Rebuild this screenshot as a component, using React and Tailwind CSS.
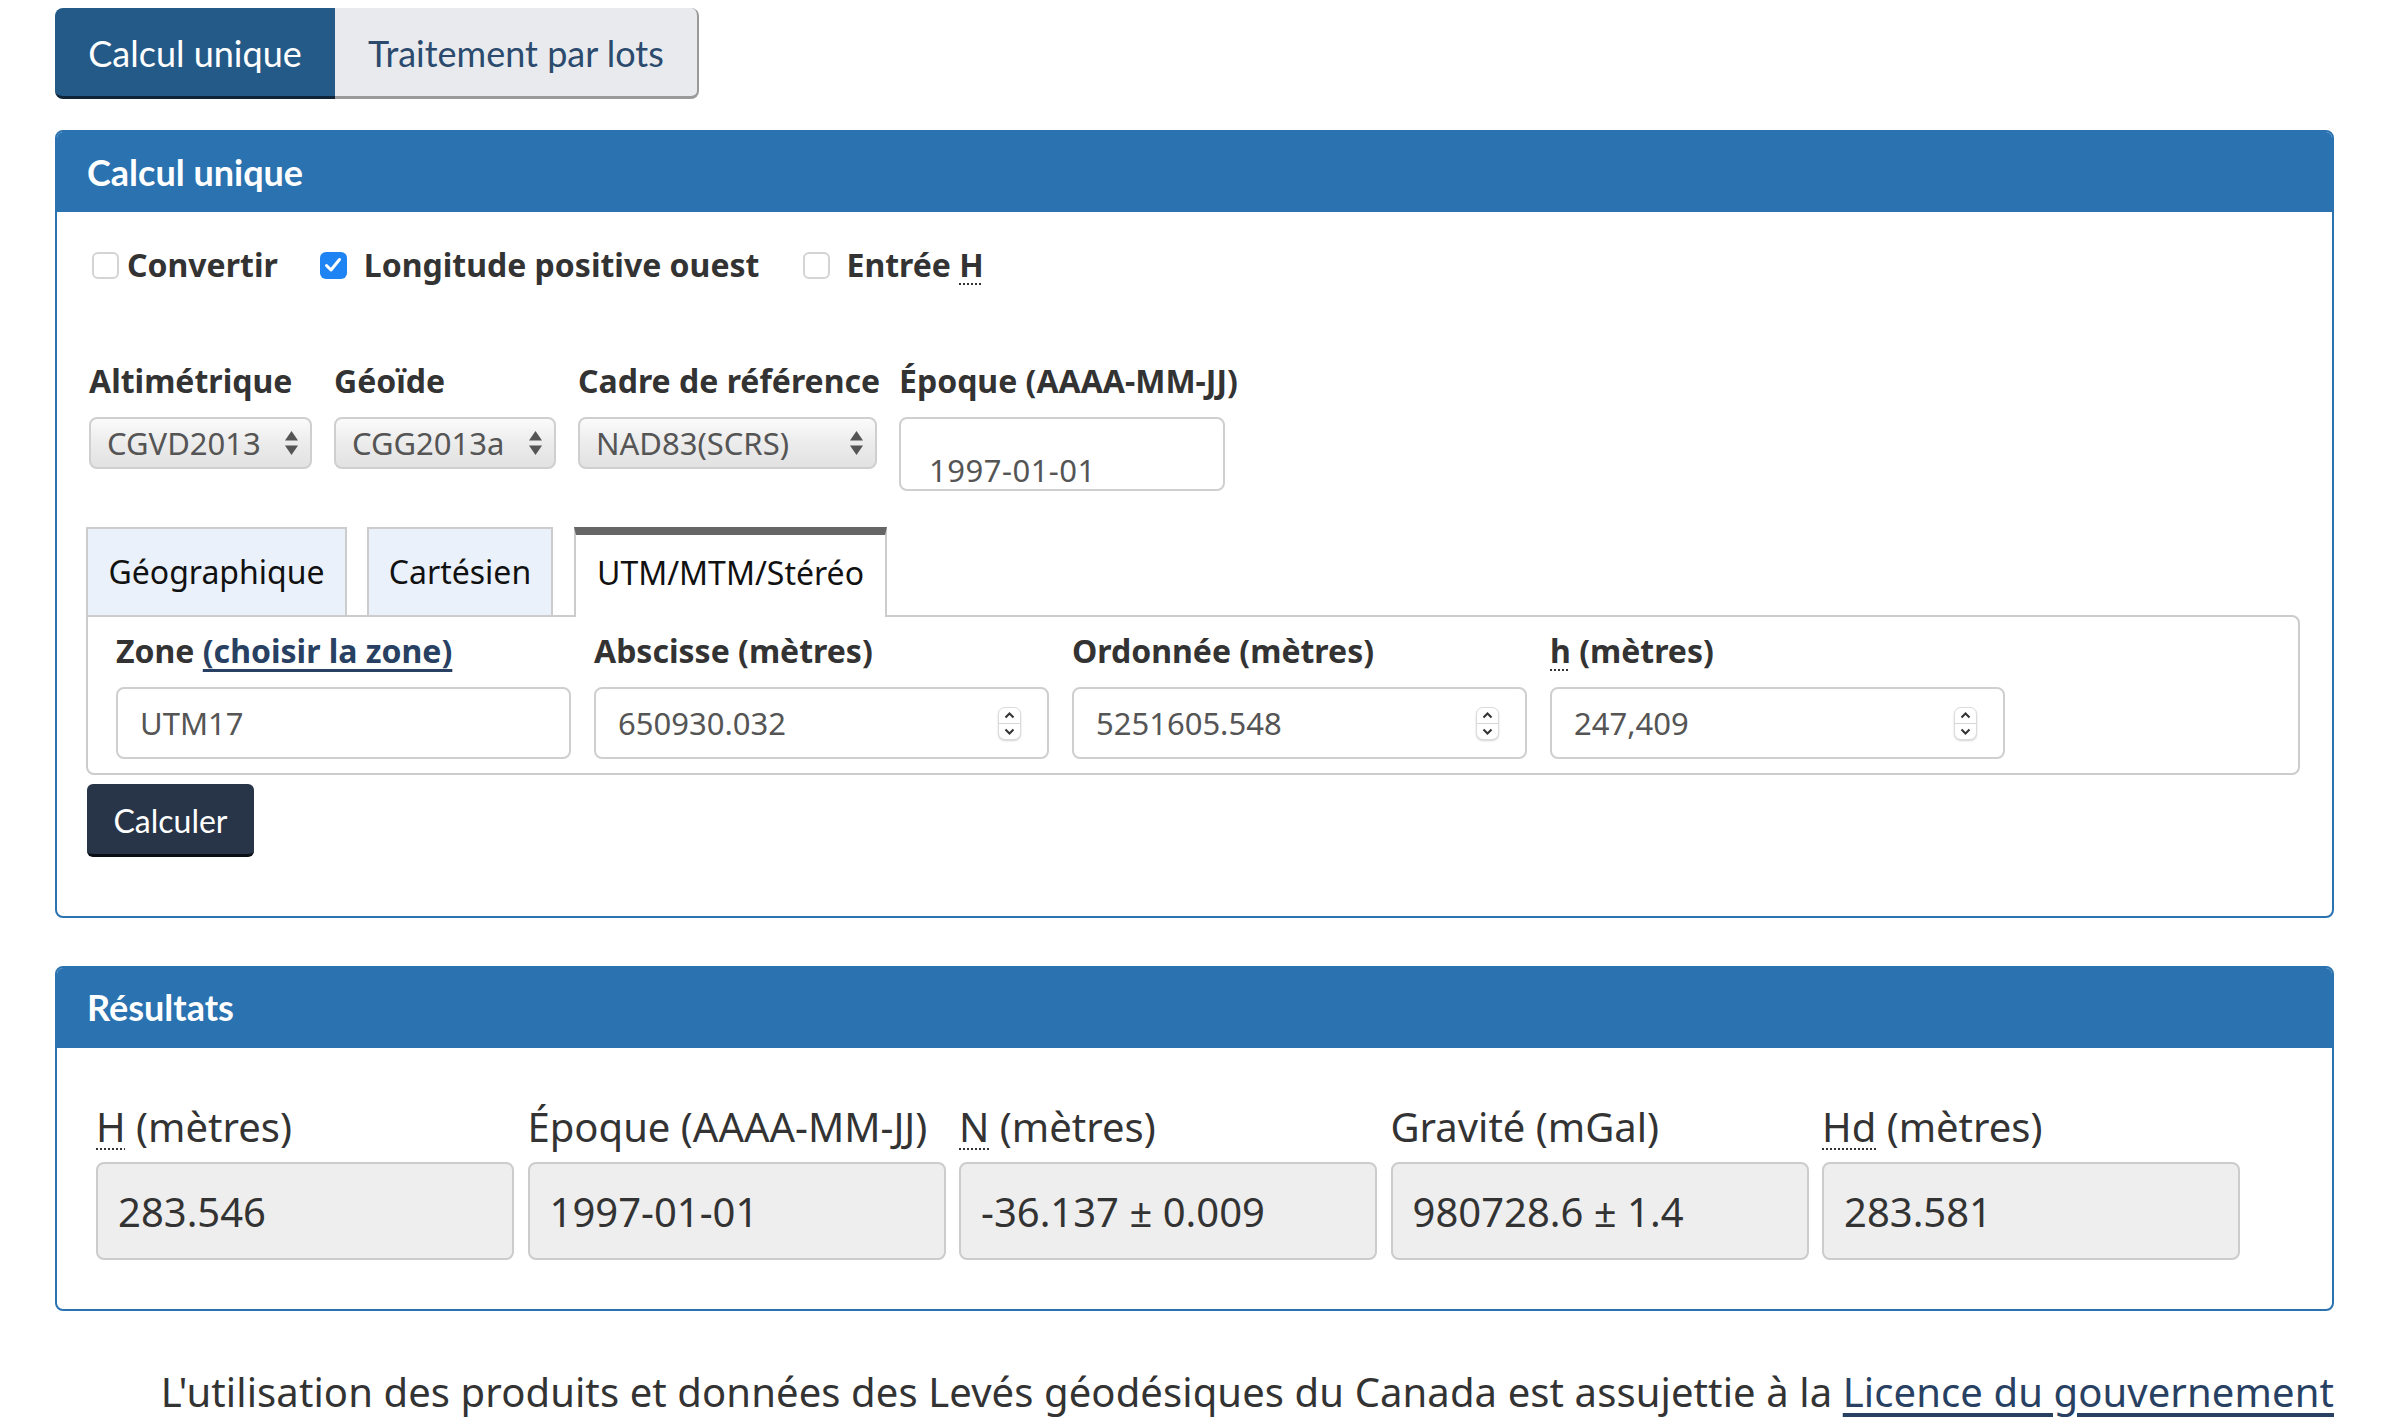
import React from 'react';

const body = { fontFamily: '"Noto Sans", "Open Sans", sans-serif' };
const lato = { fontFamily: 'Lato, "Noto Sans", sans-serif' };

const SelectArrows = () => (
    <svg width="15" height="26" viewBox="0 0 15 26" className="shrink-0">
        <path d="M7.5 1 L14 10.5 L1 10.5 Z" fill="#555" />
        <path d="M7.5 25 L14 15.5 L1 15.5 Z" fill="#555" />
    </svg>
);

const Spinner = () => (
    <div className="w-[23px] h-[33px] shrink-0 rounded-[7px] bg-white border border-[#dcdcdc] shadow-[0_1px_2px_rgba(0,0,0,0.18)] flex flex-col">
        <div className="flex-1 flex items-center justify-center border-b border-[#d6d6d6]">
            <svg width="11" height="7" viewBox="0 0 11 7"><path d="M1.5 5.5 L5.5 1.5 L9.5 5.5" stroke="#333" strokeWidth="2" fill="none" /></svg>
        </div>
        <div className="flex-1 flex items-center justify-center">
            <svg width="11" height="7" viewBox="0 0 11 7"><path d="M1.5 1.5 L5.5 5.5 L9.5 1.5" stroke="#333" strokeWidth="2" fill="none" /></svg>
        </div>
    </div>
);

const Checkbox = ({ checked }) =>
    checked ? (
        <span className="block w-[27px] h-[27px] rounded-[6px] bg-[#1f84f3] flex items-center justify-center shrink-0">
            <svg width="18" height="16" viewBox="0 0 18 16">
                <path d="M2.5 8.5 L7 13 L15.5 2.5" stroke="#fff" strokeWidth="3" fill="none" strokeLinecap="round" strokeLinejoin="round" />
            </svg>
        </span>
    ) : (
        <span className="block w-[27px] h-[27px] rounded-[6px] bg-white border-2 border-[#d4d4d4] shrink-0" />
    );

const Select = ({ value, width }) => (
    <div
        className={`h-[52px] rounded-[8px] border-2 border-[#cfcfcf] bg-linear-to-b from-[#fbfbfb] via-[#ececec] to-[#e2e2e2] flex items-center justify-between pl-[16px] pr-[11px] text-[31px] text-[#555] leading-none ${width}`}
    >
        <span>{value}</span>
        <SelectArrows />
    </div>
);

const Abbr = ({ children }) => (
    <span className="underline decoration-dotted decoration-[2px] underline-offset-[6px]">{children}</span>
);

const coordFields = [
    { label: 'Abscisse (mètres)', value: '650930.032' },
    { label: 'Ordonnée (mètres)', value: '5251605.548' },
    { label: <><Abbr>h</Abbr> (mètres)</>, value: '247,409' },
];

const results = [
    { label: <><Abbr>H</Abbr> (mètres)</>, value: '283.546' },
    { label: 'Époque (AAAA-MM-JJ)', value: '1997-01-01' },
    { label: <><Abbr>N</Abbr> (mètres)</>, value: '-36.137 ± 0.009' },
    { label: 'Gravité (mGal)', value: '980728.6 ± 1.4' },
    { label: <><Abbr>Hd</Abbr> (mètres)</>, value: '283.581' },
];

export default function App() {
    return (
        <div className="w-[2392px] h-[1428px] overflow-hidden bg-white text-[#333]" style={body}>
            <div className="pl-[55px] pr-[58px] pt-[8px]">
                {/* Onglets du haut */}
                <div className="flex" style={lato}>
                    <div className="w-[280px] h-[91px] rounded-l-[8px] bg-[#245a88] border-b-[3px] border-[#0f2438] text-white text-[36px] flex items-center justify-center pt-[2px]">
                        Calcul unique
                    </div>
                    <div className="w-[364px] h-[91px] rounded-r-[8px] bg-[#e9eaed] border-b-[3px] border-r-2 border-[#9a9a9a] text-[#2b4a6d] text-[36px] flex items-center justify-center pt-[2px]">
                        Traitement par lots
                    </div>
                </div>

                {/* Panneau Calcul unique */}
                <div className="mt-[31px] border-2 border-[#2a72b0] rounded-[8px] overflow-hidden">
                    <div className="h-[80px] bg-[#2a72b0] text-white text-[36px] font-bold flex items-center pl-[30px]" style={lato}>
                        Calcul unique
                    </div>
                    <div className="px-[30px] pt-[29px] pb-[59px]">
                        <div className="flex items-center h-[48px] text-[32px] font-bold leading-[48px]">
                            <span className="ml-[5px]"><Checkbox /></span>
                            <span className="ml-[8px]">Convertir</span>
                            <span className="ml-[42px]"><Checkbox checked /></span>
                            <span className="ml-[17px]">Longitude positive ouest</span>
                            <span className="ml-[44px]"><Checkbox /></span>
                            <span className="ml-[16px]">Entrée <Abbr>H</Abbr></span>
                        </div>

                        <div className="mt-[68px] ml-[2px] flex gap-[22px] items-start">
                            <div className="w-[223px]">
                                <div className="text-[32px] font-bold leading-[48px] whitespace-nowrap">Altimétrique</div>
                                <div className="mt-[12px]"><Select value="CGVD2013" width="w-[223px]" /></div>
                            </div>
                            <div className="w-[222px]">
                                <div className="text-[32px] font-bold leading-[48px] whitespace-nowrap">Géoïde</div>
                                <div className="mt-[12px]"><Select value="CGG2013a" width="w-[222px]" /></div>
                            </div>
                            <div className="w-[299px]">
                                <div className="text-[32px] font-bold leading-[48px] whitespace-nowrap">Cadre de référence</div>
                                <div className="mt-[12px]"><Select value="NAD83(SCRS)" width="w-[299px]" /></div>
                            </div>
                            <div className="w-[326px]">
                                <div className="text-[32px] font-bold leading-[48px] whitespace-nowrap">Époque (AAAA-MM-JJ)</div>
                                <div className="mt-[12px] h-[74px] border-2 border-[#cfcfcf] rounded-[8px] pl-[28px] pt-[31px] text-[31px] leading-[40px] text-[#555] tracking-[0.5px]">
                                    1997-01-01
                                </div>
                            </div>
                        </div>

                        {/* Onglets de coordonnées */}
                        <div className="mt-[36px] -ml-[1px]">
                            <div className="flex items-end -mb-[2px] text-[32px] text-[#111]">
                                <div className="w-[261px] h-[90px] bg-[#eaf1fb] border-2 border-[#cccccc] flex items-center justify-center">
                                    Géographique
                                </div>
                                <div className="ml-[20px] w-[186px] h-[90px] bg-[#eaf1fb] border-2 border-[#cccccc] flex items-center justify-center">
                                    Cartésien
                                </div>
                                <div className="ml-[21px] w-[313px] h-[90px] bg-white border-x-2 border-x-[#cccccc] border-t-[8px] border-t-[#666666] flex items-center justify-center pb-[6px] relative z-10">
                                    UTM/MTM/Stéréo
                                </div>
                            </div>
                            <div className="w-[2214px] border-2 border-[#cccccc] rounded-b-[8px] rounded-tr-[8px] pl-[28px] pt-[10px] pb-[14px] flex gap-[23px]">
                                <div className="w-[455px]">
                                    <div className="text-[32px] font-bold leading-[48px] whitespace-nowrap">
                                        Zone{' '}
                                        <span className="text-[#284162] underline decoration-[3px] underline-offset-[6px]">(choisir la zone)</span>
                                    </div>
                                    <div className="mt-[12px] h-[72px] border-2 border-[#cfcfcf] rounded-[8px] flex items-center pl-[22px] text-[31px] text-[#555]">
                                        UTM17
                                    </div>
                                </div>
                                {coordFields.map((f, i) => (
                                    <div key={i} className="w-[455px]">
                                        <div className="text-[32px] font-bold leading-[48px] whitespace-nowrap">{f.label}</div>
                                        <div className="mt-[12px] h-[72px] border-2 border-[#cfcfcf] rounded-[8px] flex items-center justify-between pl-[22px] pr-[26px] text-[31px] text-[#555]">
                                            <span>{f.value}</span>
                                            <Spinner />
                                        </div>
                                    </div>
                                ))}
                            </div>
                        </div>

                        <button
                            className="mt-[9px] w-[167px] h-[73px] rounded-[6px] bg-[#283447] border-b-[3px] border-[#0a0f17] text-white text-[32px] flex items-center justify-center pt-[4px]"
                            style={lato}
                        >
                            Calculer
                        </button>
                    </div>
                </div>

                {/* Panneau Résultats */}
                <div className="mt-[48px] border-2 border-[#2a72b0] rounded-[8px] overflow-hidden">
                    <div className="h-[80px] bg-[#2a72b0] text-white text-[36px] font-bold flex items-center pl-[30px] pb-[2px]" style={lato}>
                        Résultats
                    </div>
                    <div className="pl-[39px] pt-[49px] pb-[49px] flex gap-[13.5px]">
                        {results.map((r, i) => (
                            <div key={i} className="w-[418px]">
                                <div className="text-[40px] leading-[60px] whitespace-nowrap">{r.label}</div>
                                <div className="mt-[5px] h-[98px] bg-[#eeeeee] border-2 border-[#cccccc] rounded-[8px] flex items-center pl-[20px] pt-[2px] text-[40px]">
                                    {r.value}
                                </div>
                            </div>
                        ))}
                    </div>
                </div>

                <p className="mt-[51px] text-right text-[40px] leading-[60px] tracking-[0.1px] whitespace-nowrap">
                    L'utilisation des produits et données des Levés géodésiques du Canada est assujettie à la{' '}
                    <a className="text-[#284162] underline underline-offset-[6px]">Licence du gouvernement</a>
                </p>
            </div>
        </div>
    );
}
